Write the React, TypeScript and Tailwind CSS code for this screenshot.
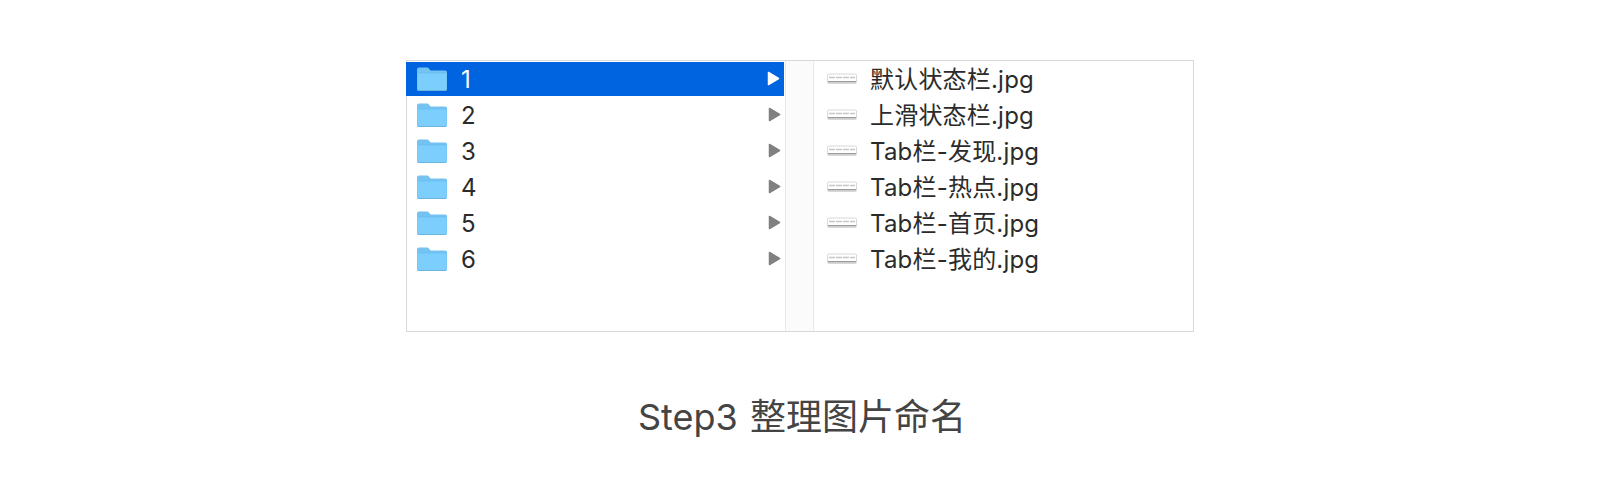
const folders = ['1', '2', '3', '4', '5', '6'];
const files = [
  '默认状态栏.jpg',
  '上滑状态栏.jpg',
  'Tab栏-发现.jpg',
  'Tab栏-热点.jpg',
  'Tab栏-首页.jpg',
  'Tab栏-我的.jpg',
];

function FolderIcon({ selected }: { selected: boolean }) {
  return (
    <svg width="32" height="26" viewBox="0 0 32 26" className={`shrink-0 ${selected ? '' : 'mb-[2px]'}`}>
      <path d="M1 4C1 2.300 1.800 1.500 3.200 1.500h7.300c1.100 0 1.700.3 2.400 1.100l1.600 1.900H29c1.300 0 2 .7 2 2v16.300c0 1.300-.8 2.200-2 2.200H3c-1.300 0-2-.8-2-2.200z" fill="#74c2f0" />
      <path d="M1.500 7.200c0-.9.5-1.400 1.400-1.400h26.200c.9 0 1.400.5 1.400 1.400v15.600c0 .9-.5 1.400-1.400 1.400H2.900c-.9 0-1.400-.5-1.400-1.400z" fill="#7ccefd" />
      <path d="M1.500 6.800c0-.6.5-1 1.400-1h26.200c.9 0 1.400.4 1.400 1v.7h-29z" fill="#6fc0f2" />
      <rect x="1.500" y="24" width="29" height="1" rx="0.500" fill="#6cb4e0" />
    </svg>
  );
}

function FileIcon() {
  return (
    <svg width="30" height="12" viewBox="0 0 30 12" className="mb-[2px] shrink-0">
      <rect x="0.500" y="1" width="29" height="9.500" rx="1" fill="#ffffff" stroke="#d8d8d8" />
      <path d="M2 4.500h26" stroke="#c8c8c8" strokeWidth="1.500" strokeDasharray="6 1" />
      <rect x="1" y="8" width="28" height="1.500" fill="#9c9c9c" />
    </svg>
  );
}

function Chevron({ selected }: { selected: boolean }) {
  return (
    <svg width="13" height="15" viewBox="0 0 13 15" className={`shrink-0 ${selected ? 'mb-[1px]' : 'mb-[4px]'}`}>
      <path
        d="M1.500 1.500L11.500 7.500L1.500 13.500z"
        fill={selected ? '#ffffff' : '#808080'}
        stroke={selected ? '#ffffff' : '#808080'}
        strokeWidth="1.500"
        strokeLinejoin="round"
      />
    </svg>
  );
}

export default function App() {
  return (
    <div
      className="h-[502px] w-[1600px] overflow-hidden bg-white pt-[60px] pl-[406px]"
      style={{ fontFamily: 'Inter, "Noto Sans CJK SC", sans-serif' }}
    >
      <div className="flex h-[272px] w-[788px] border border-[#d8d8d8] bg-white">
        {/* Folder column */}
        <div className="w-[378px] pt-px">
          {folders.map((name, i) => (
            <div
              key={name}
              className={`flex items-center pr-[4px] ${
                i === 0
                  ? '-ml-px mb-[2px] h-[34px] w-[378px] bg-[#0064e1] pl-[10px] text-white'
                  : 'h-[36px] pl-[9px] text-[#2b2b2b]'
              }`}
            >
              <FolderIcon selected={i === 0} />
              <span className={`ml-[13px] flex-1 text-[24px] ${i === 0 ? 'pt-[2px]' : ''}`}>{name}</span>
              <Chevron selected={i === 0} />
            </div>
          ))}
        </div>

        {/* Resize strip */}
        <div className="w-[29px] border-x border-[#e8e8e8] bg-[#fbfbfb]" />

        {/* File column */}
        <div className="flex-1 pt-px">
          {files.map((name) => (
            <div key={name} className="flex h-[36px] items-center pl-[13px] text-[#2b2b2b]">
              <FileIcon />
              <span className="ml-[13px] text-[24px] tracking-[0.2px]">{name}</span>
            </div>
          ))}
        </div>
      </div>

      <p className="ml-[232px] mt-[60px] text-[36px] leading-[50px] text-[#444444] [word-spacing:2px]">
        Step3 整理图片命名
      </p>
    </div>
  );
}
